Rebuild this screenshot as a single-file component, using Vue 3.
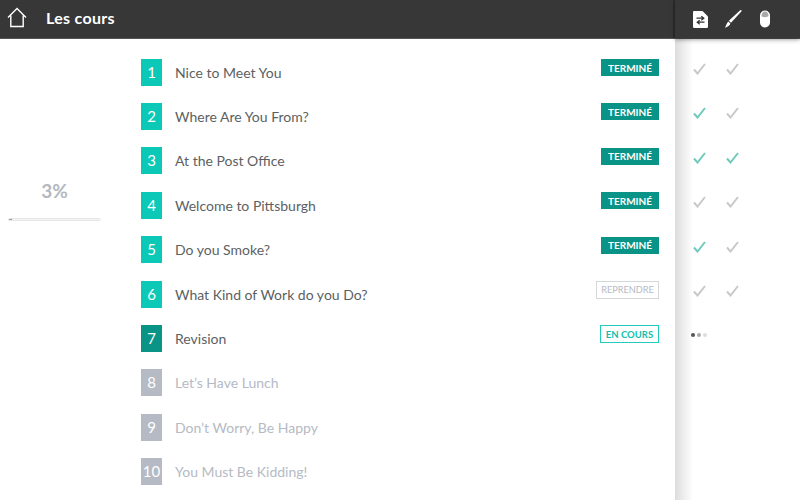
<script setup>
const lessons = [
  { n: 1, title: 'Nice to Meet You', status: 'done', checks: [0, 0] },
  { n: 2, title: 'Where Are You From?', status: 'done', checks: [1, 0] },
  { n: 3, title: 'At the Post Office', status: 'done', checks: [1, 1] },
  { n: 4, title: 'Welcome to Pittsburgh', status: 'done', checks: [0, 0] },
  { n: 5, title: 'Do you Smoke?', status: 'done', checks: [1, 0] },
  { n: 6, title: 'What Kind of Work do you Do?', status: 'resume', checks: [0, 0] },
  { n: 7, title: 'Revision', status: 'current', checks: null },
  { n: 8, title: "Let’s Have Lunch", status: 'locked', checks: null },
  { n: 9, title: "Don’t Worry, Be Happy", status: 'locked', checks: null },
  { n: 10, title: 'You Must Be Kidding!', status: 'locked', checks: null }
]
const labels = { done: 'TERMINÉ', resume: 'REPRENDRE', current: 'EN COURS' }
</script>

<template>
  <div class="app">
    <header class="topbar">
      <div class="bar-left">
        <svg class="home" width="20" height="21" viewBox="0 0 20 21" fill="none" stroke="#fff" stroke-width="1.4">
          <path d="M1 10.500 10 1.500l9 9M3.800 8.500v11h12.400v-11" stroke-linejoin="miter" />
        </svg>
        <span class="bar-title">Les cours</span>
      </div>
      <div class="bar-right">
        <svg class="i-file" width="15" height="17" viewBox="0 0 15 17">
          <path d="M1 0h8.500L15 5.500v10.300a1.200 1.200 0 0 1-1.200 1.200H1.200A1.200 1.200 0 0 1 0 15.800V1a1 1 0 0 1 1-1z" fill="#fff" />
          <path d="M3.500 7.200h7M8.300 5.200l2.500 2-2.500 2M11.500 11.200h-7M6.700 9.200l-2.500 2 2.500 2" fill="none" stroke="#333" stroke-width="1.200" />
        </svg>
        <svg class="i-pen" width="17" height="18" viewBox="0 0 17 18">
          <path d="M17 .8 6 12.800l-2.200-2L15.500 0z" fill="#fff" />
          <path d="M3.200 11.400 5.400 13.500c-.6 2-2.800 3.500-5.400 4.200.9-2 1.700-4.500 3.200-6.300z" fill="#fff" />
        </svg>
        <svg class="i-mouse" width="10" height="18" viewBox="0 0 10 18">
          <rect x="0" y="0.500" width="10" height="17" rx="5" fill="#fff" />
          <path d="M1.500 6C1.500 3 3 1.500 5 1.500S8.500 3 8.500 6c-1 1.500-6 1.500-7 0z" fill="#a8a8a8" />
        </svg>
      </div>
    </header>

    <div class="body">
      <aside class="progress">
        <div class="percent">3%</div>
        <div class="track"><div class="fill" :style="{ width: '3%' }"></div></div>
      </aside>

      <ul class="list">
        <li v-for="l in lessons" :key="l.n" class="row">
          <span class="num" :class="l.status">{{ l.n }}</span>
          <span class="title" :class="{ muted: l.status === 'locked' }">{{ l.title }}</span>
          <span v-if="labels[l.status]" class="tag" :class="l.status">{{ labels[l.status] }}</span>
        </li>
      </ul>

      <aside class="side">
        <template v-for="l in lessons" :key="l.n">
          <div v-if="l.checks" class="checks">
            <svg v-for="(c, i) in l.checks" :key="i" width="13" height="12" viewBox="0 0 13 12" fill="none" :stroke="c ? '#6fc9bd' : '#c6c8ca'" stroke-width="2">
              <path d="M1 6.500 4.500 10.500 12 1" />
            </svg>
          </div>
        </template>
        <div class="dots"><i class="d1"></i><i class="d2"></i><i class="d3"></i></div>
      </aside>
    </div>
  </div>
</template>

<style>
html, body { margin: 0; background: #fff; }
</style>

<style scoped>
.app {
  width: 800px;
  height: 500px;
  overflow: hidden;
  display: flex;
  flex-direction: column;
  font-family: Lato, "Open Sans", sans-serif;
}
.topbar {
  display: flex;
  height: 38px;
  flex: none;
  background: #373737;
  border-bottom: 1px solid #555;
  position: relative;
  z-index: 2;
}
.bar-left {
  width: 675px;
  display: flex;
  align-items: center;
  gap: 19px;
  padding: 0 0 3px 7px;
  box-sizing: border-box;
  border-right: 2px solid #2c2c2c;
}
.home { flex: none; }
.bar-title {
  color: #fff;
  font-size: 16px;
  font-weight: 700;
  letter-spacing: 0.3px;
}
.bar-right {
  flex: 1;
  display: flex;
  align-items: center;
  padding-left: 18px;
  box-shadow: 0 2px 4px rgba(0, 0, 0, 0.35);
}
.i-pen { margin-left: 17px; }
.i-mouse { margin-left: 18px; }
.body {
  flex: 1;
  min-height: 0;
  display: flex;
}
.progress {
  width: 110px;
  flex: none;
  box-sizing: border-box;
  padding: 141px 9px 0 8px;
  display: flex;
  flex-direction: column;
  align-items: stretch;
}
.percent {
  color: #b4b8c0;
  font-size: 19px;
  font-weight: 700;
  text-align: center;
  line-height: 22px;
}
.track {
  margin-top: 16px;
  height: 3px;
  width: 93px;
  background: #f4f4f4;
  border: 1px solid #e6e6e6;
  box-sizing: border-box;
  border-radius: 2px;
}
.fill {
  height: 100%;
  background: #999;
}
.list {
  list-style: none;
  margin: 0;
  padding: 11px 16px 0 31px;
  flex: 1;
  min-width: 0;
}
.row {
  display: flex;
  align-items: center;
  height: 44.4px;
}
.num {
  width: 21px;
  height: 27px;
  flex: none;
  display: flex;
  align-items: center;
  justify-content: center;
  color: #fff;
  font-size: 15px;
  font-weight: 400;
  padding-bottom: 1px;
  box-sizing: border-box;
  background: #0bc9b6;
}
.num.current { background: #0a9387; }
.num.locked { background: #b5bac4; }
.title {
  margin-left: 13px;
  font-size: 14px;
  color: #5c5f62;
}
.title.muted { color: #b5bac4; }
.tag {
  margin-left: auto;
  align-self: flex-start;
  margin-top: 9px;
  box-sizing: border-box;
  height: 17px;
  display: flex;
  align-items: center;
  justify-content: center;
  font-size: 10px;
  font-weight: 700;
  white-space: nowrap;
}
.tag.done {
  width: 58px;
  background: #0a9387;
  color: #fff;
}
.tag.resume {
  width: 63px;
  height: 18px;
  border: 1px solid #d4d6d8;
  color: #b5bac4;
  font-size: 9.200px;
  font-weight: 400;
}
.tag.current {
  width: 59px;
  height: 18px;
  border: 1px solid #22cbba;
  color: #0fbfae;
  font-size: 9.500px;
}
.side {
  width: 125px;
  flex: none;
  box-sizing: border-box;
  padding-top: 9px;
  background: linear-gradient(90deg, #dcdcdc 0, #ececec 8px, #fff 18px);
}
.checks {
  display: flex;
  gap: 20px;
  height: 44.4px;
  padding: 15px 0 0 18px;
  box-sizing: border-box;
}
.dots {
  display: flex;
  gap: 2px;
  padding: 19px 0 0 16px;
}
.dots i {
  width: 4px;
  height: 4px;
  border-radius: 50%;
}
.d1 { background: #555; }
.d2 { background: #aaa; }
.d3 { background: #ddd; }
</style>
